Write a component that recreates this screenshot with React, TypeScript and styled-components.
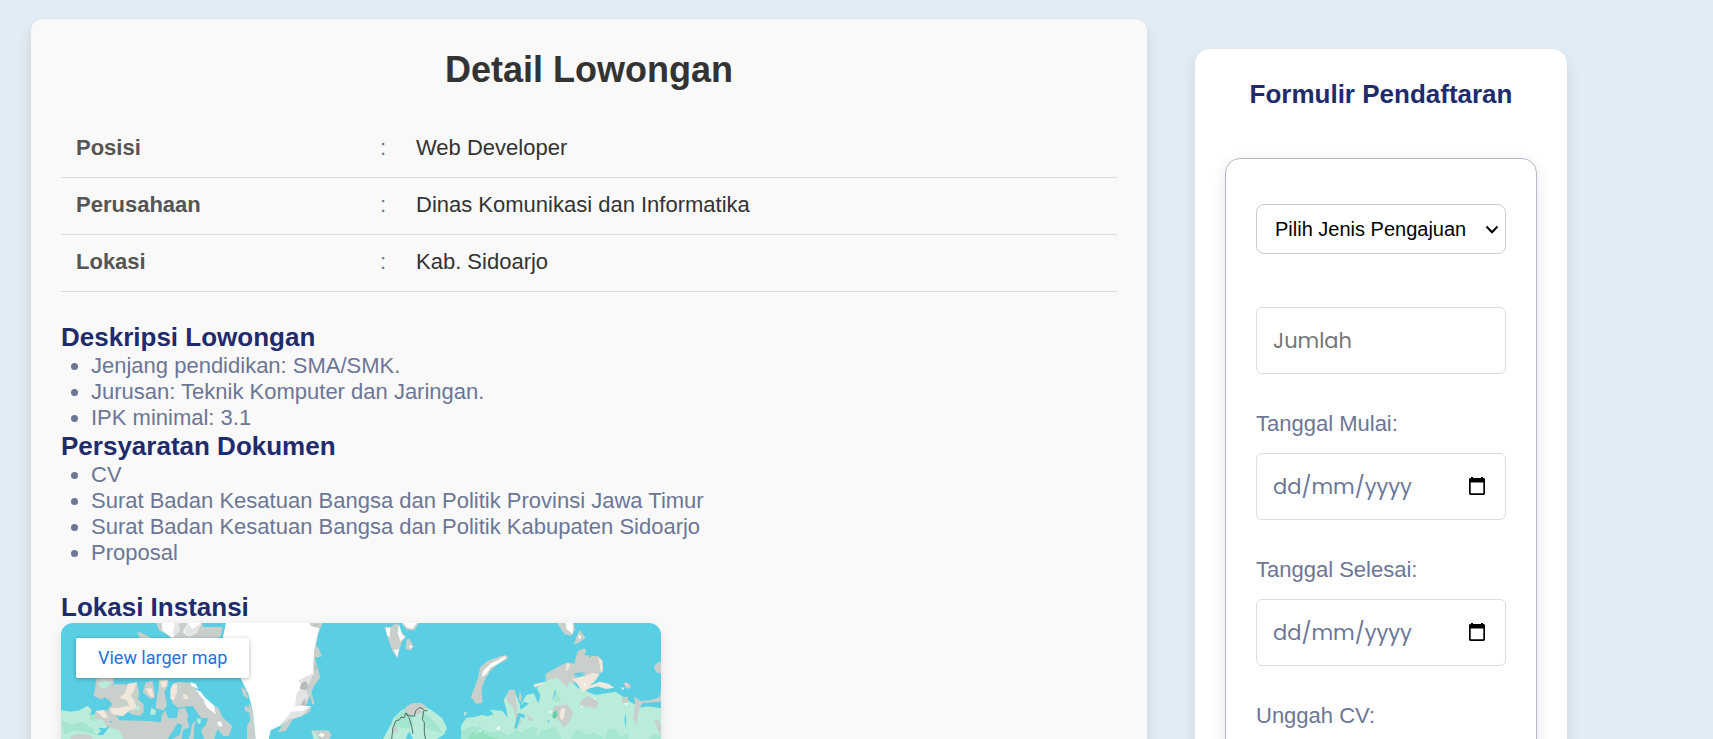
import React from 'react';
import styled, { createGlobalStyle } from 'styled-components';

const GlobalStyle = createGlobalStyle`
  *, *::before, *::after { box-sizing: border-box; }
  body {
    margin: 0;
    background: #e1ecf5;
    color: #6c7695;
    font-family: Arial, "Liberation Sans", sans-serif;
    font-size: 22px;
    line-height: 26px;
  }
`;

const Page = styled.div`
  display: grid;
  grid-template-columns: minmax(0, 3fr) minmax(0, 1fr);
  align-items: start;
  gap: 48px;
  height: 100vh;
  overflow: hidden;
  padding: 19px 146px 0 31px;
`;

const DetailCard = styled.main`
  padding: 30px;
  border-radius: 12px;
  background: #f9f9f9;
  box-shadow: 0 8px 16px rgba(0, 0, 0, 0.1);
`;

const Title = styled.h1`
  margin: 0 0 30px;
  color: #333;
  font-size: 36px;
  line-height: 42px;
  text-align: center;
`;

const InfoTable = styled.table`
  width: 100%;
  margin-bottom: 30px;
  border-collapse: collapse;
  table-layout: fixed;
`;

const InfoRow = styled.tr`
  border-bottom: 1px solid #ddd;
`;

const InfoLabel = styled.th`
  width: 304px;
  padding: 14px 15px 16px;
  color: #555;
  text-align: left;
`;

const InfoColon = styled.td`
  width: 36px;
  padding: 14px 0 16px;
  text-align: center;
`;

const InfoValue = styled.td`
  padding: 14px 15px 16px;
  color: #333;
`;

const Heading = styled.h2<{ $center?: boolean }>`
  margin: 0;
  color: #1f2b6c;
  font-size: 26px;
  line-height: 31px;
  text-align: ${({ $center }) => ($center ? 'center' : 'left')};
`;

const List = styled.ul<{ $spaced?: boolean }>`
  margin: 0 0 ${({ $spaced }) => ($spaced ? 26 : 0)}px;
  padding-left: 30px;
`;

const MapFrame = styled.div`
  position: relative;
  max-width: 600px;
  height: 450px;
  overflow: hidden;
  border-radius: 12px;
  background: #5acfe4;
  box-shadow: 0 4px 12px rgba(0, 0, 0, 0.1);
`;

const MapSvg = styled.svg`
  display: block;
  width: 100%;
`;

const MapLink = styled.a`
  position: absolute;
  top: 15px;
  left: 15px;
  padding: 0 22px;
  border-radius: 2px;
  background: #fff;
  box-shadow: 0 1px 4px rgba(0, 0, 0, 0.3);
  color: #1a73e8;
  font-family: Roboto, sans-serif;
  font-size: 18px;
  line-height: 40px;
  text-decoration: none;
`;

const FormCard = styled.aside`
  margin-top: 30px;
  padding: 30px;
  border-radius: 15px;
  background: #fff;
  box-shadow: 0 8px 16px rgba(0, 0, 0, 0.1);
`;

const Form = styled.form`
  margin-top: 48px;
  padding: 45px 30px;
  border: 1px solid #b8b5c9;
  border-radius: 15px;
  background: #fff;
  box-shadow: 0 4px 15px rgba(0, 0, 0, 0.1);
`;

const SelectWrap = styled.div`
  position: relative;
`;

const Select = styled.select`
  display: block;
  width: 100%;
  height: 50px;
  padding: 0 32px 0 18px;
  border: 1px solid #ccc;
  border-radius: 8px;
  background: #fff;
  color: #000;
  font: 20px Arial, "Liberation Sans", sans-serif;
  appearance: none;
`;

const Chevron = styled.svg`
  position: absolute;
  top: 21px;
  right: 7px;
  pointer-events: none;
`;

const Field = styled.div<{ $first?: boolean }>`
  margin-top: ${({ $first }) => ($first ? 53 : 37)}px;
`;

const Label = styled.label`
  display: block;
  margin-bottom: 16px;
`;

const InputBox = styled.div`
  display: flex;
  align-items: center;
  height: 67px;
  padding: 0 16px;
  border: 1px solid #ddd;
  border-radius: 6px;
  background: #fff;
`;

const Input = styled.input<{ $tone?: string }>`
  flex: 1;
  min-width: 0;
  padding: 0;
  border: 0;
  outline: 0;
  background: transparent;
  color: #6c7695;
  font: 21px Poppins, Lato, sans-serif;
  &::placeholder {
    color: ${({ $tone }) => $tone || '#757575'};
    opacity: 1;
  }
`;

const PickerButton = styled.button`
  display: flex;
  padding: 0 3px 2px;
  border: 0;
  background: none;
`;

const CalendarIcon = () => (
  <svg width="18" height="20" viewBox="0 0 18 20" aria-hidden="true">
    <path
      fill="#000"
      fillRule="evenodd"
      d="M3 1h2v1h8V1h2v1h.8A1.4 1.4 0 0 1 17 3.4V17.600A1.400 1.400 0 0 1 15.600 19H2.400A1.400 1.400 0 0 1 1 17.600V3.400A1.400 1.400 0 0 1 2.400 2H3zM2.700 6.500v10.800h12.600V6.500z"
    />
  </svg>
);

const DateField = ({ id, label }: { id: string; label: string }) => (
  <Field>
    <Label htmlFor={id}>{label}</Label>
    <InputBox>
      <Input id={id} placeholder="dd/mm/yyyy" $tone="#6c7695" />
      <PickerButton type="button" aria-label={`Buka kalender ${label}`}>
        <CalendarIcon />
      </PickerButton>
    </InputBox>
  </Field>
);

const ArcticMap = () => (
  <MapSvg viewBox="0 0 1800 1350" aria-hidden="true">
    {/* Arctic Canada */}
    <path fill="#c9cfca" d="M285 0h135l8 12 56 0-4 28-28 10H338l-18-14-26-14zM228 26l14 4 24 12 4 10-34-8zM105 168l50-6 4 20-12 20-24 28-26-12 6-24zM146 198l16-14 32 0 16 12 18-16 6 30-2 20 16 14 0 24-12 10-24-4-12-8-20 14-32-4-8-18 14-14-10-12-14-10zM254 178l20-4 6 30 2 18-14 6-22-20zM294 172l28-2-2 20-10 16 8 40-10 16-24-6 4-36 4-16zM332 190l20-14 32 4 18 16 24 20 22 26 24 12 12 28 30 28-10 28-16 2-16-20-24-8-24-22-14-20-16-22-44 6-18-16z" />
    <path fill="#c9cfca" d="M104 264l30-4 32 20 10 12 86 2 38 4 2-22 10-14 10 24 26-2 4-26 20-4 10 22-4 14 8 22-20 8-4 26 14 20 10-26 8-36 10-12 28 2 42 12-14 40-20 16v10H0v-60l90-4z" />
    <path fill="#5acfe4" d="M350 300l14 6-8 30-22 12h-14l14-22zM408 285l34 0-8 20-14 18 10 25h-32l2-40z" />
    <path fill="#f1e7da" d="M200 182l28-4-8 22-10 20 10 12 8 26-22 4-20 18-34-8-6-16 30-2 28-6-6-16-24-8 18-14zM104 264l24-2 14 20-14 4zM296 174l24-2-4 18-12 6zM254 196l18 0 8 28-14-6zM328 200l8-18 12-2 0 30-10 22-10-4zM366 212l12 4 6 12-16 0z" />
    <path fill="#fff" d="M302 0l54 0-8 20-12 26-10-6-22-18zM380 0h42l-16 28-26 12-14-12zM386 178l18 4 8 16-20-8zM404 200l16 6 8 14 32 28 4 26-28-22-8-20zM468 296l12 0 4 14-10 0z" />
    <path fill="#e4e6e5" d="M340 0l14 0 2 24-14 16-6-10zM380 0l14 18 26-18-12 30-22 12-16-14z" />
    <path fill="#b9edda" d="M0 262l28 4 28-4 24-14 12 12-4 16 14 0-2 12 26 2 12 22 36 8 14 28 20 8v8H0zM110 180l18-8 26 6-20 16-14 4zM270 256l14 4 0 14-16 2zM408 286l12 2-2 14-8 0zM350 194l6-10-2 20zM222 252l12-4 4 10-12 6z" />
    <path fill="#a3e5cd" d="M0 292l30 12 34-8 30 20 10 20-34-10-30-4-30 12zM82 256l6 22 14 0-2 12 12 6-24-4z" />
    <path fill="#5acfe4" d="M108 336l12-12-8-10 20 2 14-8-8 14-12 14zM150 300l-6-6 12 0z" />
    <path fill="#c9cfca" d="M28 340l26-8 34 4 8 12H30z" />

    {/* Greenland and Iceland */}
    <g transform="translate(540)">
      <path fill="#c9cfca" d="M205 0h40l-14 34-6 36 8 6 10 24-22 4 12 40 4 20-18 24-8 20 10 34-6 4-8-26-12 28-36 4 8-40zM0 192l14 8 8 28-14-8zM10 248l10 4 8 16-16-4zM24 240l12 24 8 84h-26l0-38 10-20-6-30zM212 254l-10 16-48 20-20 34-24 4 30-40 36-34z" />
      <path fill="#fff" d="M-45 0H205l6 10 24 6-8 30-8 40-2 70-34 24-12 36-4 30 44 4-32 20-32 4-30 34-28 14-6 26H44L36 266 22 212 0 168l-20-56-36-62z" />
      <path fill="#e2e4e4" d="M216 150l-44 22 12 20-18 22-4 36 30-2 10-30-10-22 18-24zM198 262l-48 4-20 26-16 22 32-26 36-8z" />
      <path fill="#b7bcb9" d="M182 180l14-6 6 20-12 8-14-6zM208 8l24-6-4 6zM218 118l12 20-10 4zM184 236l8-10 2 22-14-2z" />
      <path fill="#c9cfca" d="M210 322h52l10 14-8 12h-44z" />
      <path fill="#b9edda" d="M212 326l12 2 8 20h-14z" />
      <path fill="#fff" d="M238 330l14 4-6 8-14-4z" />
    </g>

    {/* Svalbard and Scandinavia */}
    <g transform="translate(540)">
      <path fill="#c9cfca" d="M430 12l20 0 10-8 12 0 6 20 16 16-10 14-8 24-6 28-14-18-8-20zM496 50l8-4 14 24-8 12-16-4zM482 0h52l-14 22-24-2z" />
      <path fill="#fff" d="M474 4l10 32 10 6-16 12-8-24zM486 0h42l-14 18-18-6zM434 14l14 0-2 30-8-8zM458 82l16-4-6 24zM504 66l10 4-6 8z" />
      <path fill="#b9edda" d="M426 348l26-48 6-16 26-24 18-6 30-12 38 18 34 26 14 30-8 18-22 14z" />
      <path fill="#a3e5cd" d="M466 282l24-22 20 8 8 40-24 10-20-8-22 20 8-30zM540 260l40 34 26 36-40-10-16-12z" />
      <path fill="#c9cfca" d="M496 250l20-10 24 0 16 10-6 14-26 14-18-2-16-8zM452 314l16-2 2 14-14 6z" />
      <path fill="#5acfe4" d="M516 348l-10-22-6 6-6 16z" />
      <path fill="none" stroke="#4f7068" strokeWidth="3" d="M452 348l4-34 8-20 12-4 4-8 10 2 4-14 10 14 8 26 4 22M494 270l12 8 14 2 4-16 10-10 10 2 8 8 8-2M548 264l-4 26 6 8 0 32 4 18" />
    </g>

    {/* Siberia */}
    <g transform="translate(1200)">
      <path fill="#c9cfca" d="M132 96l8 4-2 10-30 16-20 18-14 22-12 28 2 46-20 2-14-20 20-54 8-36 22-18 32-12zM288 0h50l4 20-12 18-20-4-12-20zM356 20l18 24-16 12-20 10 8-24zM590 118l10-2v36l-14-4-8-16z" />
      <path fill="#fff" d="M130 100l6 4-28 20-20 10-12 20-14 8 4-18 22-22 22-10zM314 0l22 0 0 34-20-16zM352 34l10 8-8 8z" />
      <path fill="#b9edda" d="M0 308l16-24 26-2 20-6 20 4 6-20 36 4 16 20-4-24-8-28 10-20 24-4 16 40 18-32 26-6 16 20-10-36 24-18 24-20 38 2 36 36 54 22 60-10 40 28 34 20 24-4 40 6V348H0zM10 268l8-2-4 10-6 2z" />
      <path fill="#a3e5cd" d="M0 322l30-12 24 4-4-20 12 24 36 10 20-4 24 14 24-18 16 10 30-20 20 6-8 20 34 12H0zM240 318l16 4 24-12 22 38h-70zM330 340l20-22 26 18 24-8 34 20h-104zM440 318l20 0 22 24 20-14 0 20h-70zM560 348l20-14 20 4v10zM280 200l22 30-20 8z" opacity=".85" />
      <path fill="#91e2bd" d="M20 348l14-20 18 6 10-10 20 14 30 10z" />
      <path fill="#c9cfca" d="M254 152l40-22 26-12 20 4 10-38 20-8 6 6-6 14 44 4 12 20-2 26-22 14-40-6-20 10-4 20-14-8-4 18-32-30-34 8zM144 200l18 0 4 40 4 36 12 16-8 16-18 10 8-24-6-40-20-20-2-14zM176 200l6 22-2 16-6-10zM196 276l20 8 0 10-14-2zM356 238l22-20 20 10 14 10-8 20-26-8-18 2zM520 220l18 14 30-2 28-10 4-20v34l-56 4-10 22-8 46-10-24 6-40zM490 178l16 4 4 10-10 6-10-8zM278 250l40-6 18 24-10 30-18 14-14-20-20-14zM480 226l20-6 2 18-16 4zM580 290l12 0 8 20v30l-12-28z" />
      <path fill="#f1e7da" d="M332 168l34-8 28-10 22 4-14 20-16 14 30-12 26 6 18 12-26 4-24-8-24 6-20 12-18-26zM412 104l12 8 2 32-6 6zM318 120l10 4-8 18-6 0zM218 184l36-8-14 10-20 8zM300 258l12-4-2 30-10 8-4-18zM492 180l8 2-2 8z" />
      <path fill="#5acfe4" d="M274 230l8-28 4 2-10 26zM160 318l6-32 6-16 18 4 2 12-14-4-10 34zM340 150l34-2-16 8-16 4zM490 290l4-18 2 26-2 16zM176 250l14-14 14 6-24 18zM218 190l20 24-6 28-14-32zM262 290l4 4-6 8zM88 262l-10 18 20-6z" />
      <path fill="#5fd0a4" d="M276 270l10-8 4 14-10 12-6-6zM380 98l10-2 0 8z" />
      <path fill="#fff" d="M106 316l8-6 4 6-8 4zM262 266l8-4 2 8zM358 252l8-6-2 8zM482 192l8 4-6 6zM368 176l8 10-4 6zM398 222l6 4-4 4zM492 240l8 0-4 8zM54 322l6-2-2 8z" />
    </g>
  </MapSvg>
);

const details = [
  ['Posisi', 'Web Developer'],
  ['Perusahaan', 'Dinas Komunikasi dan Informatika'],
  ['Lokasi', 'Kab. Sidoarjo'],
];

export default function App() {
  return (
    <>
      <GlobalStyle />
      <Page>
        <DetailCard>
          <Title>Detail Lowongan</Title>
          <InfoTable>
            <tbody>
              {details.map(([label, value]) => (
                <InfoRow key={label}>
                  <InfoLabel scope="row">{label}</InfoLabel>
                  <InfoColon>:</InfoColon>
                  <InfoValue>{value}</InfoValue>
                </InfoRow>
              ))}
            </tbody>
          </InfoTable>
          <Heading>Deskripsi Lowongan</Heading>
          <List>
            <li>Jenjang pendidikan: SMA/SMK.</li>
            <li>Jurusan: Teknik Komputer dan Jaringan.</li>
            <li>IPK minimal: 3.1</li>
          </List>
          <Heading>Persyaratan Dokumen</Heading>
          <List $spaced>
            <li>CV</li>
            <li>Surat Badan Kesatuan Bangsa dan Politik Provinsi Jawa Timur</li>
            <li>Surat Badan Kesatuan Bangsa dan Politik Kabupaten Sidoarjo</li>
            <li>Proposal</li>
          </List>
          <Heading>Lokasi Instansi</Heading>
          <MapFrame>
            <ArcticMap />
            <MapLink href="#map">View larger map</MapLink>
          </MapFrame>
        </DetailCard>
        <FormCard>
          <Heading $center>Formulir Pendaftaran</Heading>
          <Form>
            <SelectWrap>
              <Select aria-label="Jenis Pengajuan" defaultValue="">
                <option value="">Pilih Jenis Pengajuan</option>
              </Select>
              <Chevron width="14" height="10" viewBox="0 0 14 10" aria-hidden="true">
                <path d="M1.500 1.500L7 7.200l5.500-5.700" fill="none" stroke="#000" strokeWidth="2" />
              </Chevron>
            </SelectWrap>
            <Field $first>
              <InputBox>
                <Input aria-label="Jumlah" placeholder="Jumlah" />
              </InputBox>
            </Field>
            <DateField id="mulai" label="Tanggal Mulai:" />
            <DateField id="selesai" label="Tanggal Selesai:" />
            <Field>
              <Label htmlFor="cv">Unggah CV:</Label>
              <input id="cv" type="file" />
            </Field>
          </Form>
        </FormCard>
      </Page>
    </>
  );
}
